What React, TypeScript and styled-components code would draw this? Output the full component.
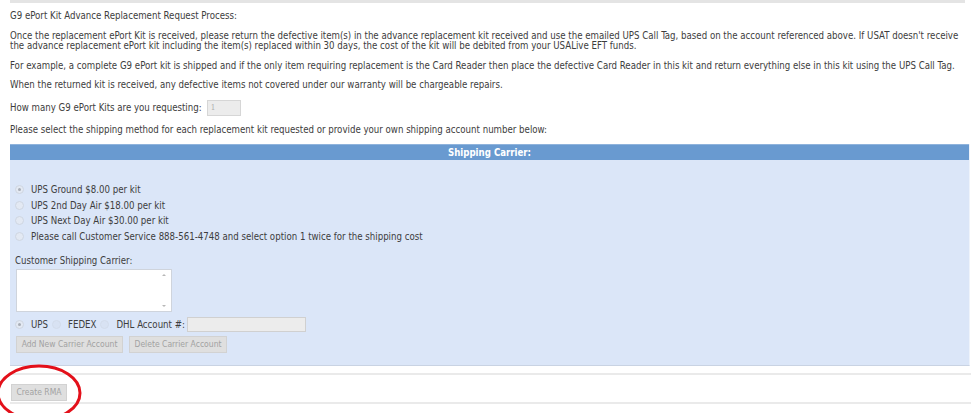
import React from "react";
import styled, { createGlobalStyle } from "styled-components";

const Global = createGlobalStyle`
  html, body { margin: 0; padding: 0; background: #ffffff; }
  body {
    font-family: "DejaVu Sans Condensed", "DejaVu Sans", Verdana, sans-serif;
    font-stretch: condensed;
    font-size: 9.6px;
    color: #3d3d3d;
  }
`;

const Page = styled.div`
  position: relative;
  width: 971px;
  height: 413px;
  overflow: hidden;
  padding-left: 10px;
  box-sizing: border-box;
`;

const TopRule = styled.div`
  height: 3px;
  width: 955px;
  background: #e4e4e4;
`;

const Text = styled.p<{ $mt: number }>`
  margin: ${(p) => p.$mt}px 0 0 0;
  line-height: 10.5px;
  padding-right: 8px;
`;

const QtyRow = styled.div`
  display: flex;
  align-items: center;
  gap: 5px;
  margin-top: 9px;
  height: 16px;
`;

const QtyBox = styled.div`
  width: 29px;
  height: 14px;
  border: 1px solid #d6d6d6;
  background: #ececec;
  color: #b0b0b0;
  font-family: "DejaVu Serif", serif;
  font-size: 8px;
  line-height: 14px;
  padding-left: 3px;
`;

const Panel = styled.div`
  margin-top: 8px;
  width: 959px;
  background: #dbe6f8;
  border-right: 1px solid #eef3fb;
  border-bottom: 1px solid #c9d3e3;
  padding-bottom: 12px;
`;

const PanelHeader = styled.div`
  height: 15px;
  background: #699ad0;
  border-top: 1px solid #8fb3dc;
  color: #ffffff;
  font-weight: bold;
  text-align: center;
  line-height: 15px;
`;

const Options = styled.div`
  display: flex;
  flex-direction: column;
  gap: 5.5px;
  padding: 25px 0 0 5px;
`;

const OptionRow = styled.div`
  display: flex;
  align-items: center;
  height: 10px;
`;

const Radio = styled.span<{ $checked?: boolean; $faint?: boolean }>`
  display: inline-block;
  box-sizing: border-box;
  width: 9px;
  height: 9px;
  border-radius: 50%;
  border: 1px solid ${(p) => (p.$faint ? "#d3dceb" : "#cfd6e2")};
  background: ${(p) => (p.$faint ? "#d8e2f3" : "#e3e9f3")};
  position: relative;
  margin-right: 7px;
  flex: none;
  &::after {
    content: "";
    display: ${(p) => (p.$checked ? "block" : "none")};
    position: absolute;
    left: 2px;
    top: 2px;
    width: 3px;
    height: 3px;
    border-radius: 50%;
    background: #a8adb6;
  }
`;

const Label = styled.div`
  margin: 15px 0 0 5px;
  line-height: 10px;
`;

const TextArea = styled.div`
  position: relative;
  box-sizing: border-box;
  margin: 3px 0 0 6px;
  width: 156px;
  height: 43px;
  background: #ffffff;
  border: 1px solid #cfd4dc;
`;

const ScrollArrow = styled.span<{ $down?: boolean }>`
  position: absolute;
  right: 5px;
  ${(p) => (p.$down ? "bottom: 4px;" : "top: 4px;")}
  width: 0;
  height: 0;
  border-left: 2px solid transparent;
  border-right: 2px solid transparent;
  ${(p) =>
    p.$down ? "border-top: 2px solid #b8b8b8;" : "border-bottom: 2px solid #b8b8b8;"}
`;

const CarrierRow = styled.div`
  display: flex;
  align-items: center;
  margin: 4px 0 0 5px;
  height: 16px;
`;

const CarrierText = styled.span<{ $gap?: number }>`
  margin-right: ${(p) => p.$gap ?? 4}px;
`;

const AccountBox = styled.div`
  box-sizing: border-box;
  width: 119px;
  height: 15px;
  background: #ececec;
  border: 1px solid #d0d0d0;
  margin-left: 1px;
`;

const ButtonRow = styled.div`
  display: flex;
  gap: 6px;
  margin: 4px 0 0 6px;
`;

const GrayButton = styled.div<{ $w: number }>`
  box-sizing: border-box;
  width: ${(p) => p.$w}px;
  height: 17px;
  background: #dfdfdf;
  border: 1px solid #d2d2d2;
  color: #a2a2a2;
  line-height: 15px;
  text-align: center;
  font-size: 8.5px;
`;

const Divider = styled.div<{ $mt: number }>`
  margin-top: ${(p) => p.$mt}px;
  width: 961px;
  height: 2px;
  background: #eaeaea;
`;

const Footer = styled.div`
  padding: 9px 0 0 1px;
`;

const Annotation = styled.svg`
  position: absolute;
  left: 0;
  top: 360px;
  width: 90px;
  height: 60px;
  overflow: visible;
`;

export default function App() {
  return (
    <Page>
      <Global />
      <TopRule />
      <Text $mt={8}>G9 ePort Kit Advance Replacement Request Process:</Text>
      <Text $mt={9}>
        Once the replacement ePort Kit is received, please return the defective item(s) in the advance
        replacement kit received and use the emailed UPS Call Tag, based on the account referenced above. If
        USAT doesn't receive the advance replacement ePort kit including the item(s) replaced within 30 days,
        the cost of the kit will be debited from your USALive EFT funds.
      </Text>
      <Text $mt={9}>
        For example, a complete G9 ePort kit is shipped and if the only item requiring replacement is the Card
        Reader then place the defective Card Reader in this kit and return everything else in this kit using the
        UPS Call Tag.
      </Text>
      <Text $mt={9}>
        When the returned kit is received, any defective items not covered under our warranty will be chargeable
        repairs.
      </Text>
      <QtyRow>
        <span>How many G9 ePort Kits are you requesting:</span>
        <QtyBox>1</QtyBox>
      </QtyRow>
      <Text $mt={9.5}>
        Please select the shipping method for each replacement kit requested or provide your own shipping account
        number below:
      </Text>
      <Panel>
        <PanelHeader>Shipping Carrier:</PanelHeader>
        <Options>
          <OptionRow>
            <Radio $checked />
            UPS Ground $8.00 per kit
          </OptionRow>
          <OptionRow>
            <Radio />
            UPS 2nd Day Air $18.00 per kit
          </OptionRow>
          <OptionRow>
            <Radio />
            UPS Next Day Air $30.00 per kit
          </OptionRow>
          <OptionRow>
            <Radio />
            Please call Customer Service 888-561-4748 and select option 1 twice for the shipping cost
          </OptionRow>
        </Options>
        <Label>Customer Shipping Carrier:</Label>
        <TextArea>
          <ScrollArrow />
          <ScrollArrow $down />
        </TextArea>
        <CarrierRow>
          <Radio $checked />
          <CarrierText>UPS</CarrierText>
          <Radio $faint />
          <CarrierText>FEDEX</CarrierText>
          <Radio $faint />
          <CarrierText $gap={1}>DHL Account #:</CarrierText>
          <AccountBox />
        </CarrierRow>
        <ButtonRow>
          <GrayButton $w={107}>Add New Carrier Account</GrayButton>
          <GrayButton $w={98}>Delete Carrier Account</GrayButton>
        </ButtonRow>
      </Panel>
      <Divider $mt={7} />
      <Footer>
        <GrayButton $w={56}>Create RMA</GrayButton>
      </Footer>
      <Divider $mt={1} />
      <Annotation viewBox="0 0 90 60">
        <ellipse cx="39" cy="33" rx="41" ry="27" fill="none" stroke="#e3101a" strokeWidth="3" />
      </Annotation>
    </Page>
  );
}
